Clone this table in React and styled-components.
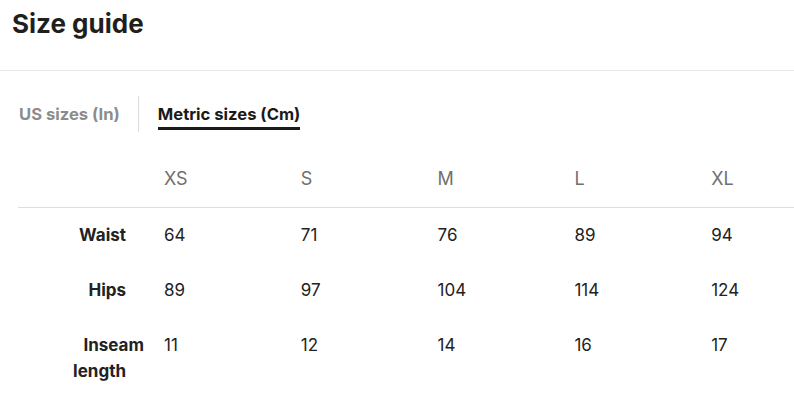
import React, { useState } from "react";
import styled, { createGlobalStyle } from "styled-components";

const GlobalStyle = createGlobalStyle`
  html, body {
    margin: 0;
    padding: 0;
    background: #fff;
    overflow: hidden;
  }
  body {
    font-family: Inter, Lato, sans-serif;
    color: #222;
  }
`;

const Page = styled.div`
  width: 794px;
  overflow: hidden;
`;

const Header = styled.header`
  height: 71px;
  box-sizing: border-box;
  padding: 8px 12px 0;
  border-bottom: 1px solid #e6e6e6;
`;

const Title = styled.h1`
  margin: 0;
  font-size: 26px;
  line-height: 32px;
  font-weight: 700;
  color: #1f1f1f;
`;

const TabBar = styled.div`
  display: flex;
  align-items: flex-start;
  padding: 25px 0 0 19px;
`;

const Tab = styled.button`
  border: 0;
  background: none;
  font-family: inherit;
  font-size: 16.6px;
  line-height: 20px;
  font-weight: 700;
  padding: 8px 0 3px;
  cursor: pointer;
  color: ${(p) => (p.$active ? "#1a1a1a" : "#8c8c8c")};
  border-bottom: 3px solid ${(p) => (p.$active ? "#1a1a1a" : "transparent")};
`;

const Divider = styled.span`
  width: 1px;
  height: 36px;
  background: #dcdcdc;
  margin: 0 19px 0 18px;
`;

const Table = styled.div`
  margin-left: 18px;
  display: grid;
  grid-template-columns: 128px repeat(5, 136.8px);
`;

const HeadCell = styled.div`
  padding: 35px 0 16px ${(p) => (p.$label ? 0 : 18)}px;
  font-size: 18px;
  line-height: 24px;
  color: #707070;
  border-bottom: 1px solid #dedede;
`;

const LabelCell = styled.div`
  padding: 14px 20px 15px 0;
  font-size: 17px;
  line-height: 26px;
  font-weight: 700;
  color: #222;
  text-align: right;
`;

const LabelLine = styled.span`
  display: block;
  margin-right: ${(p) => p.$shift || 0}px;
`;

const ValueCell = styled.div`
  padding: 14px 0 15px 18px;
  font-size: 17px;
  line-height: 26px;
  color: #222;
`;

const sizes = ["XS", "S", "M", "L", "XL"];

const rows = [
  { label: ["Waist"], cm: [64, 71, 76, 89, 94] },
  { label: ["Hips"], cm: [89, 97, 104, 114, 124] },
  { label: ["Inseam", "length"], cm: [11, 12, 14, 16, 17] },
];

export default function App() {
  const [unit, setUnit] = useState("cm");
  return (
    <Page>
      <GlobalStyle />
      <Header>
        <Title>Size guide</Title>
      </Header>
      <TabBar>
        <Tab $active={unit === "in"} onClick={() => setUnit("in")}>
          US sizes (In)
        </Tab>
        <Divider />
        <Tab $active={unit === "cm"} onClick={() => setUnit("cm")}>
          Metric sizes (Cm)
        </Tab>
      </TabBar>
      <Table>
        <HeadCell $label />
        {sizes.map((s) => (
          <HeadCell key={s}>{s}</HeadCell>
        ))}
        {rows.map((r) => (
          <React.Fragment key={r.label[0]}>
            <LabelCell>
              {r.label.map((l, i) => (
                <LabelLine key={l} $shift={r.label.length > 1 && i === 0 ? -18 : 0}>
                  {l}
                </LabelLine>
              ))}
            </LabelCell>
            {r.cm.map((v, i) => (
              <ValueCell key={sizes[i]}>
                {unit === "cm" ? v : Math.round(v / 2.54)}
              </ValueCell>
            ))}
          </React.Fragment>
        ))}
      </Table>
    </Page>
  );
}
